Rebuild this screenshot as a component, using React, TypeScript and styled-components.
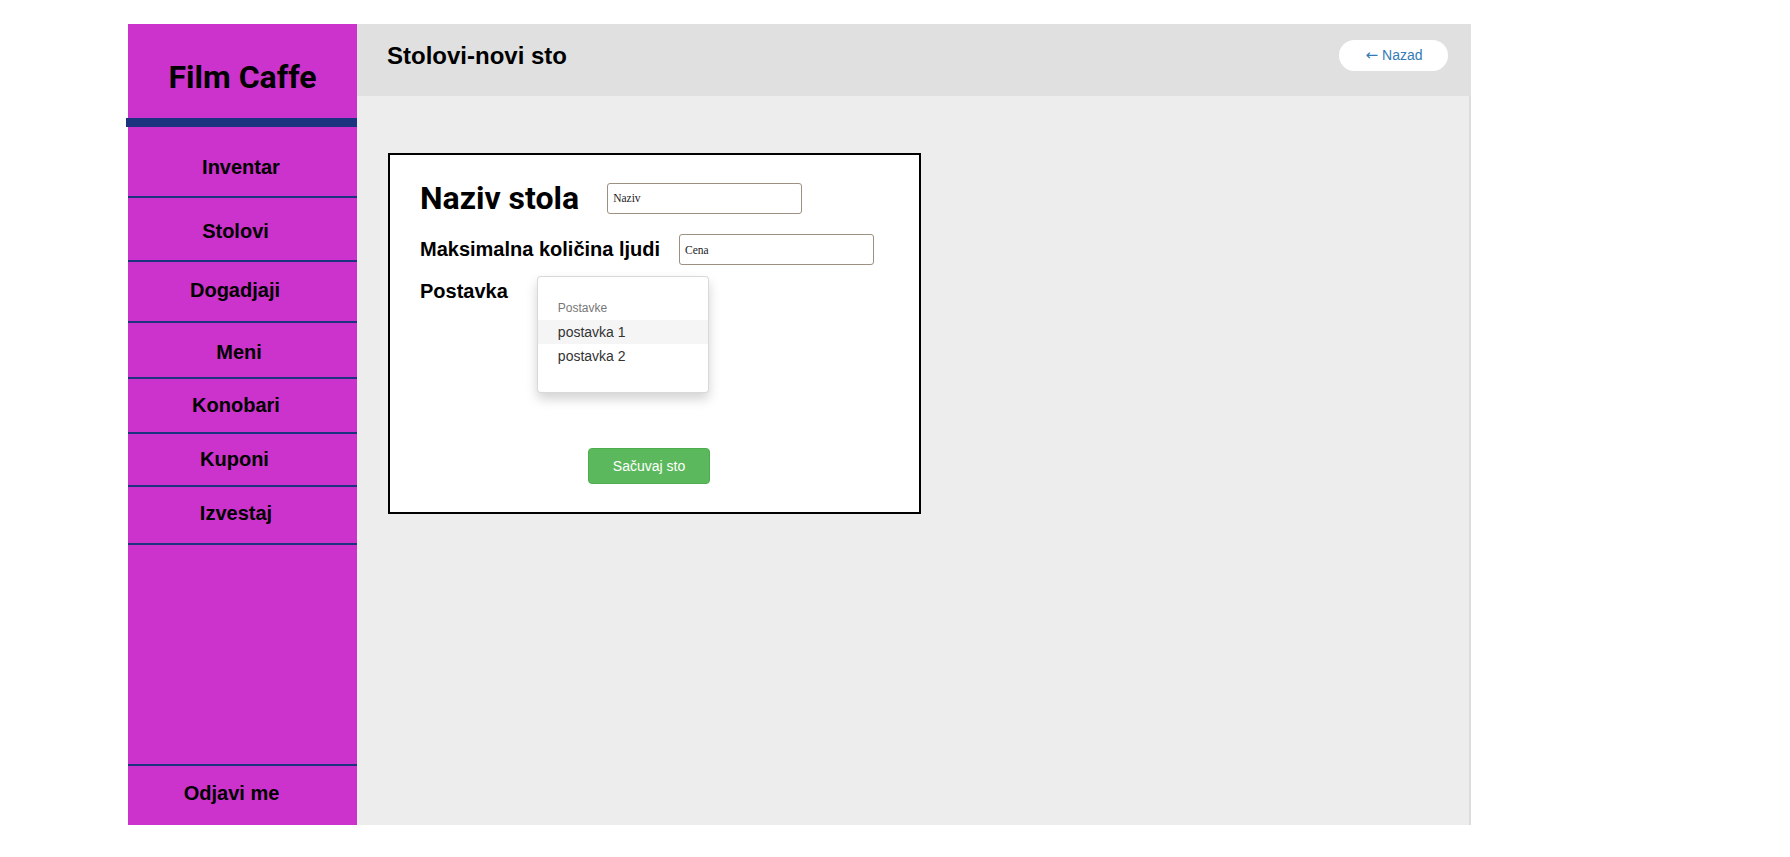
import React from "react";
import styled, { createGlobalStyle } from "styled-components";

const Global = createGlobalStyle`
  html, body { margin: 0; padding: 0; background: #ffffff; }
  body { font-family: "Liberation Sans", Arial, sans-serif; }
  * { box-sizing: border-box; }
`;

const Page = styled.div`
  display: flex;
  align-items: flex-start;
  padding: 24px 0 0 128px;
`;

const Sidebar = styled.aside`
  width: 229px;
  height: 801px;
  background: #cc33cc;
  display: flex;
  flex-direction: column;
`;

const Brand = styled.h1`
  margin: 0;
  padding: 34px 0 22px;
  font-family: Roboto, "Liberation Sans", sans-serif;
  font-weight: 700;
  font-size: 32px;
  line-height: 38px;
  text-align: center;
  color: #000;
`;

const BrandRule = styled.div`
  height: 9px;
  margin: 0 -1px 0 -2px;
  background: #1c3380;
`;

const NavItem = styled.a<{ $pt: number; $pb: number; $shift: number; $bottom?: boolean }>`
  display: block;
  padding: ${(p) => p.$pt}px ${(p) => p.$shift}px ${(p) => p.$pb}px 0;
  border-bottom: ${(p) => (p.$bottom ? "none" : "2px solid #1c3380")};
  border-top: ${(p) => (p.$bottom ? "2px solid #1c3380" : "none")};
  margin-top: ${(p) => (p.$bottom ? "auto" : "0")};
  font-family: "Liberation Sans", Arial, sans-serif;
  font-size: 20px;
  font-weight: 700;
  line-height: 23px;
  text-align: center;
  color: #000;
  text-decoration: none;
  cursor: pointer;
`;

const Main = styled.main`
  width: 1114px;
  height: 801px;
  display: flex;
  flex-direction: column;
  background: #ededed;
`;

const Header = styled.header`
  height: 72px;
  flex: none;
  background: #e0e0e0;
  display: flex;
  align-items: center;
  justify-content: space-between;
  padding: 0 23px 10px 30px;
`;

const Title = styled.h2`
  margin: 2px 0 0;
  font-family: "Liberation Sans", Arial, sans-serif;
  font-size: 24px;
  line-height: 28px;
  font-weight: 700;
  color: #000;
`;

const BackButton = styled.button`
  width: 109px;
  height: 31px;
  border: none;
  border-radius: 16px;
  background: #ffffff;
  color: #337ab7;
  font-family: "Liberation Sans", Arial, sans-serif;
  font-size: 14px;
  padding: 0 0 0 1px;
  cursor: pointer;
`;

const Arrow = styled.span`
  font-family: "DejaVu Sans", sans-serif;
  font-size: 15px;
  margin-right: 4px;
`;

const Body = styled.section`
  flex: 1;
  padding: 57px 0 0 31px;
  border-right: 2px solid #dcdcdc;
`;

const Card = styled.form`
  width: 533px;
  border: 2px solid #000;
  background: #ffffff;
  padding: 24px 0 28px 30px;
  display: flex;
  flex-direction: column;
  align-items: flex-start;
`;

const Row = styled.div<{ $gap: number; $mb: number; $h?: number; $align?: string }>`
  display: flex;
  align-items: ${(p) => p.$align || "center"};
  gap: ${(p) => p.$gap}px;
  margin-bottom: ${(p) => p.$mb}px;
  height: ${(p) => (p.$h ? `${p.$h}px` : "auto")};
`;

const BigLabel = styled.label`
  font-family: Roboto, "Liberation Sans", sans-serif;
  font-size: 32px;
  line-height: 38px;
  font-weight: 700;
  color: #000;
`;

const Label = styled.label<{ $mt?: number }>`
  font-family: "Liberation Sans", Arial, sans-serif;
  font-size: 20px;
  line-height: 23px;
  font-weight: 700;
  color: #000;
  margin-top: ${(p) => p.$mt || 0}px;
`;

const TextInput = styled.input`
  width: 195px;
  height: 31px;
  border: 1px solid #9c9080;
  border-radius: 3px;
  padding: 0 5px;
  font-family: "Liberation Serif", "Times New Roman", serif;
  font-size: 11.5px;
  color: #222;
  background: #fff;
  outline: none;
  &::placeholder {
    color: #222;
  }
`;

const Menu = styled.ul`
  list-style: none;
  margin: 0;
  width: 172px;
  height: 117px;
  padding: 20px 0 24px;
  background: #fff;
  border: 1px solid rgba(0, 0, 0, 0.15);
  border-radius: 4px;
  box-shadow: 0 6px 12px rgba(0, 0, 0, 0.175);
`;

const MenuHeader = styled.li`
  padding: 3px 20px;
  font-family: "Liberation Sans", Arial, sans-serif;
  font-size: 12px;
  line-height: 17px;
  color: #777;
`;

const MenuItem = styled.li<{ $active?: boolean }>`
  padding: 2px 20px;
  font-family: "Liberation Sans", Arial, sans-serif;
  font-size: 14px;
  line-height: 20px;
  color: #333;
  background: ${(p) => (p.$active ? "#f5f5f5" : "transparent")};
  cursor: pointer;
`;

const SaveButton = styled.button`
  width: 122px;
  height: 36px;
  margin-left: 168px;
  border: 1px solid #4cae4c;
  border-radius: 4px;
  background: #5cb85c;
  color: #fff;
  font-family: "Liberation Sans", Arial, sans-serif;
  font-size: 14px;
  padding: 0;
  cursor: pointer;
`;

const navItems = [
  { label: "Inventar", pt: 29, pb: 17, shift: 3 },
  { label: "Stolovi", pt: 22, pb: 17, shift: 14 },
  { label: "Dogadjaji", pt: 17, pb: 19, shift: 15 },
  { label: "Meni", pt: 18, pb: 13, shift: 7 },
  { label: "Konobari", pt: 15, pb: 15, shift: 13 },
  { label: "Kuponi", pt: 14, pb: 14, shift: 16 },
  { label: "Izvestaj", pt: 15, pb: 18, shift: 13 },
];

export default function App() {
  return (
    <>
      <Global />
      <Page>
        <Sidebar>
          <Brand>Film Caffe</Brand>
          <BrandRule />
          {navItems.map((n) => (
            <NavItem key={n.label} $pt={n.pt} $pb={n.pb} $shift={n.shift}>
              {n.label}
            </NavItem>
          ))}
          <NavItem $pt={16} $pb={20} $shift={22} $bottom>
            Odjavi me
          </NavItem>
        </Sidebar>
        <Main>
          <Header>
            <Title>Stolovi-novi sto</Title>
            <BackButton type="button">
              <Arrow>←</Arrow>Nazad
            </BackButton>
          </Header>
          <Body>
            <Card onSubmit={(e) => e.preventDefault()}>
              <Row $gap={28} $mb={17} $h={38}>
                <BigLabel>Naziv stola</BigLabel>
                <TextInput placeholder="Naziv" />
              </Row>
              <Row $gap={19} $mb={11} $h={31}>
                <Label>Maksimalna količina ljudi</Label>
                <TextInput placeholder="Cena" />
              </Row>
              <Row $gap={29} $mb={55} $align="flex-start">
                <Label $mt={4}>Postavka</Label>
                <Menu>
                  <MenuHeader>Postavke</MenuHeader>
                  <MenuItem $active>postavka 1</MenuItem>
                  <MenuItem>postavka 2</MenuItem>
                </Menu>
              </Row>
              <SaveButton type="submit">Sačuvaj sto</SaveButton>
            </Card>
          </Body>
        </Main>
      </Page>
    </>
  );
}
